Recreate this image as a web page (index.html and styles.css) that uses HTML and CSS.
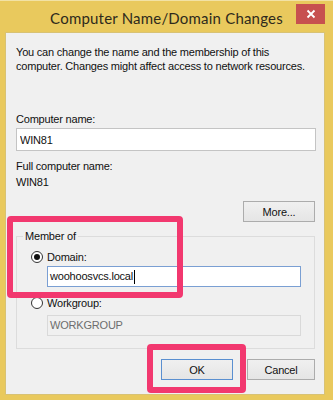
FILE: index.html
```html
<!DOCTYPE html>
<html lang="en">
<head>
    <meta charset="UTF-8">
    <title>Computer Name/Domain Changes</title>
    <link rel="stylesheet" href="styles.css">
</head>
<body>
    <div class="window">
        <div class="titlebar">
            <span class="title">Computer Name/Domain Changes</span>
            <button class="close" type="button" aria-label="Close">
                <svg width="10" height="10" viewBox="0 0 10 10">
                    <path d="M1.5 1.5 L8.5 8.5 M8.5 1.5 L1.5 8.5" stroke="#fff" stroke-width="1.8" fill="none"/>
                </svg>
            </button>
        </div>

        <div class="client">
            <p class="intro">You can change the name and the membership of this computer. Changes might affect access to network resources.</p>

            <label class="label first" for="cname">Computer name:</label>
            <input class="field" id="cname" type="text" value="WIN81">

            <div class="label gap">Full computer name:</div>
            <div class="label tight">WIN81</div>

            <div class="row-right">
                <button class="btn more" type="button">More...</button>
            </div>

            <!-- Member of -->
            <fieldset class="group">
                <legend>Member of</legend>
                <label class="radio domain"><span class="dot checked"></span>Domain:</label>
                <div class="field sub focused">woohoosvcs.local<span class="caret"></span></div>
                <label class="radio workgroup"><span class="dot"></span>Workgroup:</label>
                <div class="field sub disabled">WORKGROUP</div>
            </fieldset>

            <div class="actions">
                <button class="btn ok" type="button">OK</button>
                <button class="btn cancel" type="button">Cancel</button>
            </div>
        </div>

        <!-- annotation boxes -->
        <div class="mark mark-member"></div>
        <div class="mark mark-ok"></div>
    </div>
</body>
</html>
```

FILE: styles.css
```css
body {
    margin: 0;
    font-family: 'Liberation Sans', Arial, sans-serif;
    font-size: 11px;
    letter-spacing: -0.2px;
    color: #111;
    background: #e9c95d;
}

.window {
    position: relative;
    width: 333px;
    height: 400px;
    box-sizing: border-box;
    border-top: 1px solid #f2e2a4;
    display: flex;
    flex-direction: column;
}

.titlebar {
    height: 31px;
    display: flex;
    align-items: flex-start;
    padding-left: 37px;
}

.title {
    flex-grow: 1;
    text-align: center;
    font-family: 'Lato', 'Liberation Sans', sans-serif;
    font-size: 15px;
    letter-spacing: 0.2px;
    color: #2e2a1c;
    padding-top: 8px;
}

.close {
    width: 29px;
    height: 20px;
    margin: 3px 8px 0 0;
    padding: 0;
    border: none;
    background: #c7504f;
    display: flex;
    align-items: center;
    justify-content: center;
}

.client {
    width: 320px;
    height: 363px;
    box-sizing: border-box;
    margin-left: 5px;
    background: #f0f0f0;
    border: 1px solid #d8c274;
    padding: 12px 8px 0 10px;
    display: flex;
    flex-direction: column;
}

.intro {
    margin: 0;
    line-height: 14px;
}

.label {
    display: block;
    line-height: 14px;
}

.label.first {
    margin-top: 39px;
}

.label.gap {
    margin-top: 8px;
}

.label.tight {
    margin-top: 2px;
}

.field {
    box-sizing: border-box;
    font-family: inherit;
    font-size: 11px;
    letter-spacing: -0.2px;
    color: #111;
    background: #fff;
    border: 1px solid #abadb3;
    padding: 0 3px;
}

#cname {
    margin-top: 2px;
    width: 300px;
    height: 23px;
    border-color: #c4c4c4;
    outline: none;
}

.row-right {
    display: flex;
    justify-content: flex-end;
    margin-top: 12px;
    padding-right: 1px;
}

.btn {
    box-sizing: border-box;
    height: 21px;
    font-family: inherit;
    font-size: 11px;
    letter-spacing: -0.2px;
    color: #111;
    background: linear-gradient(#f0f0f0, #e5e5e5);
    border: 1px solid #acacac;
    padding: 0;
}

.more {
    width: 72px;
}

.group {
    margin: 7px 1px 0 0;
    padding: 0 6px 12px 6px;
    border: 1px solid #dcdcdc;
    display: flex;
    flex-direction: column;
}

.group legend {
    padding: 0 2px;
    line-height: 14px;
}

.radio {
    display: flex;
    align-items: center;
    gap: 4px;
    line-height: 14px;
    margin-left: 8px;
}

.radio.domain {
    margin-top: 7px;
}

.radio.workgroup {
    margin-top: 9px;
}

.dot {
    width: 12px;
    height: 12px;
    box-sizing: border-box;
    border: 1px solid #333;
    border-radius: 50%;
    background: #fff;
    display: flex;
    align-items: center;
    justify-content: center;
}

.dot.checked::after {
    content: "";
    width: 6px;
    height: 6px;
    border-radius: 50%;
    background: #111;
}

.field.sub {
    margin-left: 24px;
    width: 254px;
    height: 21px;
    line-height: 19px;
    padding: 0 2px;
}

.field.focused {
    margin-top: 2px;
    border-color: #7a9fd3;
    display: flex;
    align-items: center;
}

.caret {
    width: 1px;
    height: 14px;
    background: #000;
    margin-left: 1px;
}

.field.disabled {
    margin-top: 5px;
    background: #f0f0f0;
    border-color: #d9d9d9;
    color: #6d6d6d;
}

.actions {
    display: flex;
    justify-content: flex-end;
    gap: 14px;
    margin-top: 10px;
    padding-right: 1px;
}

.ok {
    width: 72px;
    border-color: #5a8fd0;
}

.cancel {
    width: 68px;
}

.mark {
    position: absolute;
    box-sizing: border-box;
    border: 6px solid #f2386f;
    border-radius: 4px;
}

.mark-member {
    left: 7px;
    top: 215px;
    width: 176px;
    height: 82px;
}

.mark-ok {
    left: 147px;
    top: 343px;
    width: 99px;
    height: 49px;
}
```
